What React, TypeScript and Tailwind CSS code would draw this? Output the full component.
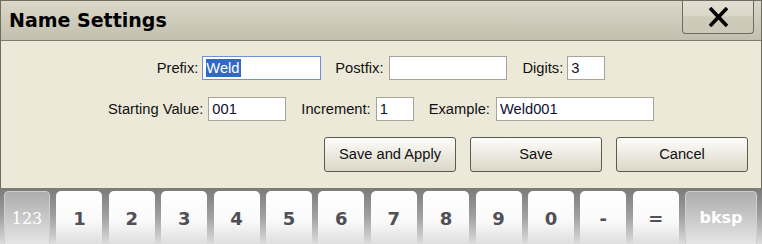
import React from "react";

function Field({ label, w, value, focused, gap = "gap-[5px]" }: { label: string; w: string; value: string; focused?: boolean; gap?: string }) {
  return (
    <div className={`flex items-center ${gap}`}>
      <span className="text-[14.7px] text-[#111]">{label}</span>
      <div
        className={`${w} h-[24px] bg-white border flex items-center pl-[3px] text-[14.7px] ${
          focused ? "border-[#6f8fd8]" : "border-[#a8a597]"
        }`}
      >
        {focused ? (
          <span className="bg-[#316ac5] text-white leading-[18px] pr-[1px]">{value}</span>
        ) : (
          <span className="text-[#101030]">{value}</span>
        )}
      </div>
    </div>
  );
}

function Btn({ children }: { children: React.ReactNode }) {
  return (
    <button className="w-[132px] h-[35px] rounded-[3px] border border-[#5a5a55] bg-gradient-to-b from-[#fdfdfa] to-[#dbd7c7] text-[14.7px] text-[#111] flex items-center justify-center">
      {children}
    </button>
  );
}

export default function App() {
  const keys = ["1", "2", "3", "4", "5", "6", "7", "8", "9", "0", "-", "="];
  return (
    <div
      className="w-[762px] h-[244px] overflow-hidden flex flex-col bg-[#ece9d8]"
      style={{ fontFamily: '"Liberation Sans", Arial, sans-serif' }}
    >
      <div className="border-l border-t border-r border-[#6f6d62] flex flex-col">
        <div className="h-[40px] border-b border-[#7d7b6d] bg-gradient-to-b from-[#dcd8c9] to-[#c3bfae] flex justify-between pl-[8px] pr-[7px]">
          <div
            className="font-bold text-[19px] leading-[39px] text-black"
            style={{ fontFamily: '"DejaVu Sans", Verdana, sans-serif' }}
          >
            Name Settings
          </div>
          <button className="w-[72px] h-[33px] rounded-b-[4px] border-l border-r border-b border-[#6b6a63] bg-[linear-gradient(to_bottom,#e2dfd2_0%,#dbd8ca_45%,#cfcbba_50%,#cdc9b8_100%)] flex items-center justify-center">
            <svg width="21" height="20" viewBox="0 0 21 20">
              <path d="M2 1 L19 19 M19 1 L2 19" stroke="#000" strokeWidth="3.6" />
            </svg>
          </button>
        </div>
        <div className="h-[147px] flex flex-col pt-[15px]">
          <div className="flex justify-center items-center h-[24px]">
            <Field label="Prefix:" w="w-[119px]" value="Weld" focused gap="gap-[4px]" />
            <div className="w-[14px]" />
            <Field label="Postfix:" w="w-[118px]" value="" gap="gap-[6px]" />
            <div className="w-[15px]" />
            <Field label="Digits:" w="w-[38px]" value="3" gap="gap-[4px]" />
          </div>
          <div className="flex justify-center items-center h-[24px] mt-[17px]">
            <Field label="Starting Value:" w="w-[78px]" value="001" />
            <div className="w-[15px]" />
            <Field label="Increment:" w="w-[38px]" value="1" />
            <div className="w-[15px]" />
            <Field label="Example:" w="w-[158px]" value="Weld001" gap="gap-[6px]" />
          </div>
          <div className="flex justify-end gap-[14px] pr-[13px] mt-[16px]">
            <Btn>Save and Apply</Btn>
            <Btn>Save</Btn>
            <Btn>Cancel</Btn>
          </div>
        </div>
      </div>
      <div className="h-[56px] overflow-hidden flex gap-[6.4px] pl-[4px] pr-[5px] pt-[3px] bg-gradient-to-b from-[#7a7a7a] via-[#a0a0a0] to-[#dcdcdc]">
        <div
          className="w-[46px] h-[60px] shrink-0 rounded-t-[4px] border border-[#cfcfcf] bg-gradient-to-b from-[#adadad] to-[#ececec] flex items-start justify-center pt-[15px] text-white text-[16px]"
          style={{ fontFamily: '"DejaVu Serif", Georgia, serif' }}
        >
          123
        </div>
        {keys.map((k) => (
          <div
            key={k}
            className="w-[46px] h-[60px] shrink-0 rounded-t-[5px] bg-gradient-to-b from-[#ffffff] via-[#fafafa] to-[#d6d6d6] flex items-start justify-center pt-[14px] text-[#4f4f55] font-bold text-[18px]"
            style={{ fontFamily: '"DejaVu Sans", Verdana, sans-serif' }}
          >
            {k}
          </div>
        ))}
        <div
          className="flex-1 h-[60px] rounded-t-[4px] border border-[#cfcfcf] bg-gradient-to-b from-[#adadad] to-[#ececec] flex items-start justify-center pt-[14px] text-white font-bold text-[16px]"
          style={{ fontFamily: '"DejaVu Sans", Verdana, sans-serif' }}
        >
          bksp
        </div>
      </div>
    </div>
  );
}
